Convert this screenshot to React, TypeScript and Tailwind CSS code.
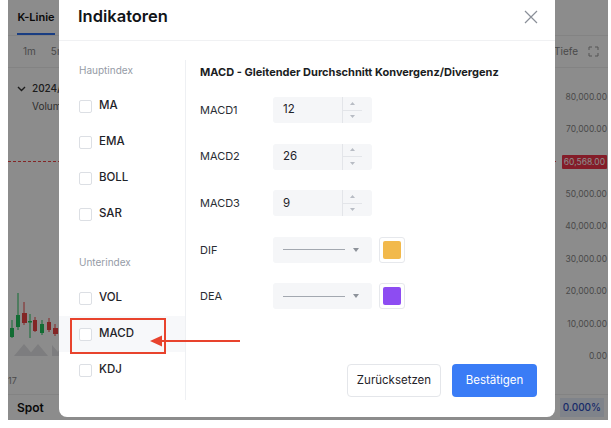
import React from "react";

const prices = [
  "80,000.00",
  "70,000.00",
  "60,568.00",
  "50,000.00",
  "40,000.00",
  "30,000.00",
  "20,000.00",
  "10,000.00",
  "0.00",
];

const Checkbox = () => (
  <span className="w-[13px] h-[13px] rounded-[2px] border border-[#dcdfe4] bg-white shrink-0" />
);

const IndexRow = ({ label, active }: { label: string; active?: boolean }) => (
  <div
    className={`h-[36px] flex items-center gap-[7px] pl-[20px] ${active ? "bg-[#f7f8fa]" : ""}`}
  >
    <Checkbox />
    <span className="text-[11.5px] font-medium text-[#1f2329]">{label}</span>
  </div>
);

const Spinner = () => (
  <div className="w-[30px] h-full flex flex-col border-l border-[#e3e5e9]">
    <div className="flex-1 flex items-center justify-center border-b border-[#e3e5e9] mr-[10px]">
      <svg width="5" height="3" viewBox="0 0 5 3">
        <path d="M0 3 L2.5 0 L5 3 Z" fill="#b8bcc4" />
      </svg>
    </div>
    <div className="flex-1 flex items-center justify-center mr-[10px]">
      <svg width="5" height="3" viewBox="0 0 5 3">
        <path d="M0 0 L2.5 3 L5 0 Z" fill="#b8bcc4" />
      </svg>
    </div>
  </div>
);

const NumberRow = ({ label, value }: { label: string; value: string }) => (
  <div className="h-[26px] flex items-center">
    <span className="w-[73px] text-[11px] text-[#2a2e34]">{label}</span>
    <div className="w-[99px] h-[26px] bg-[#f5f6f8] rounded-[3px] flex items-center justify-between">
      <span className="pl-[10px] text-[11.5px] text-[#1f2329]">{value}</span>
      <Spinner />
    </div>
  </div>
);

const LineRow = ({ label, color }: { label: string; color: string }) => (
  <div className="h-[26px] flex items-center">
    <span className="w-[73px] text-[11px] text-[#2a2e34]">{label}</span>
    <div className="w-[99px] h-[26px] bg-[#f5f6f8] rounded-[3px] flex items-center pl-[10px] pr-[13px] gap-[8px]">
      <span className="flex-1 h-px bg-[#a3a8b0]" />
      <svg width="6" height="4" viewBox="0 0 6 4">
        <path d="M0 0 L3 4 L6 0 Z" fill="#8d929a" />
      </svg>
    </div>
    <div className="ml-[7px] w-[26px] h-[26px] rounded-[3px] border border-[#e6e8ec] flex items-center justify-center">
      <span className="w-[18px] h-[18px] rounded-[2px]" style={{ backgroundColor: color }} />
    </div>
  </div>
);

const Candles = () => (
  <svg width="52" height="70" viewBox="0 0 52 70" className="absolute left-0 top-[222px]">
    <line x1="4" y1="30" x2="4" y2="48" stroke="#22c55e" strokeWidth="1" />
    <rect x="2" y="38" width="4" height="9" fill="#22c55e" />
    <line x1="10" y1="3" x2="10" y2="40" stroke="#22c55e" strokeWidth="1" />
    <rect x="8" y="25" width="4" height="12" fill="#22c55e" />
    <line x1="16" y1="12" x2="16" y2="35" stroke="#ef4444" strokeWidth="1" />
    <rect x="14" y="23" width="5" height="10" fill="#ef4444" />
    <line x1="22" y1="24" x2="22" y2="48" stroke="#22c55e" strokeWidth="1" />
    <rect x="20" y="31" width="4" height="1.5" fill="#22c55e" />
    <line x1="27" y1="27" x2="27" y2="42" stroke="#ef4444" strokeWidth="1" />
    <rect x="25" y="30" width="4" height="11" fill="#ef4444" />
    <line x1="34" y1="30" x2="34" y2="45" stroke="#22c55e" strokeWidth="1" />
    <rect x="32" y="34" width="4" height="9" fill="#22c55e" />
    <line x1="41" y1="28" x2="41" y2="42" stroke="#ef4444" strokeWidth="1" />
    <rect x="39" y="32" width="4" height="8" fill="#ef4444" />
    <line x1="47" y1="34" x2="47" y2="46" stroke="#ef4444" strokeWidth="1" />
    <rect x="45" y="38" width="5" height="6" fill="#ef4444" />
    <path d="M6 66 L16 54 L26 66 Z M20 66 L30 54 L40 66 Z" fill="#e4e4e7" />
    <path d="M44 66 L44 55 L50 62 L52 58 L52 66 Z" fill="#e4e4e7" />
  </svg>
);

export default function App() {
  return (
    <div
      className="w-[611px] h-[428px] bg-white relative overflow-hidden pl-[8px] pr-[3px] pb-[8px]"
      style={{ fontFamily: "Inter, 'Noto Sans', sans-serif" }}
    >
      {/* background trading page */}
      <div className="relative h-[420px] bg-white flex flex-col overflow-hidden">
        <div className="h-[36px] border-b border-[#eeeeee] flex items-end px-[9px]">
          <div className="flex flex-col items-center">
            <span className="text-[11px] font-semibold text-[#111] pb-[8px]">K-Linie</span>
            <span className="w-[38px] h-[2px] bg-[#2f6fed]" />
          </div>
        </div>
        <div className="h-[32px] border-b border-[#eeeeee] flex items-center justify-between pl-[15px] pr-[9px]">
          <div className="flex gap-[15px] text-[10px] text-[#888]">
            <span>1m</span>
            <span>5m</span>
            <span>15m</span>
          </div>
          <div className="flex items-center gap-[10px] text-[10px] text-[#888]">
            <span>Tiefe</span>
            <svg width="11" height="11" viewBox="0 0 11 11" fill="none" stroke="#999" strokeWidth="1">
              <path d="M1 4V1h3M7 1h3v3M10 7v3H7M4 10H1V7" />
            </svg>
          </div>
        </div>
        <div className="flex-1 flex">
          <div className="flex-1 relative">
            <div className="pl-[9px] pt-[13px] flex flex-col gap-[3px] text-[10px] text-[#333]">
              <div className="flex items-center gap-[6px]">
                <svg width="9" height="6" viewBox="0 0 9 6" fill="none" stroke="#333" strokeWidth="1.4">
                  <path d="M1 1l3.5 3.5L8 1" />
                </svg>
                <span className="font-medium">2024/01/17</span>
              </div>
              <span className="pl-[15px] text-[#555]">Volumen</span>
            </div>
            <div className="absolute left-0 right-0 top-[93px] border-t border-dashed border-[#ef4444]" />
            <Candles />
            <span className="absolute left-0 top-[306px] text-[9px] text-[#888]">17</span>
          </div>
          <div className="w-[52px] flex flex-col items-end pt-[13px] pr-[1px] text-[8.5px] text-[#888]">
            {prices.map((p) => (
              <div key={p} className="h-[32.4px] flex items-center">
                {p === "60,568.00" ? (
                  <span className="bg-[#f0334a] text-white px-[2px] py-[1px] rounded-[1px]">{p}</span>
                ) : (
                  <span>{p}</span>
                )}
              </div>
            ))}
          </div>
        </div>
        <div className="h-[26px] border-t border-[#eeeeee] flex items-center justify-between pl-[9px] pr-[4px]">
          <span className="text-[12px] font-semibold text-[#111]">Spot</span>
          <span className="bg-[#e7eefc] text-[#2e4fc0] text-[10px] font-medium px-[3px] py-[2px]">0.000%</span>
        </div>
        <div className="absolute inset-0 bg-black/45" />
      </div>

      {/* modal */}
      <div className="absolute left-[59px] top-0 w-[496px] h-[417px] bg-white rounded-b-[8px] flex flex-col">
        <div className="h-[41px] border-b border-[#f0f1f3] flex items-center justify-between pl-[19px] pr-[17px] pb-[7px]">
          <span className="text-[16.5px] font-semibold text-[#111418]">Indikatoren</span>
          <svg width="14" height="14" viewBox="0 0 14 14" fill="none" stroke="#8a8f98" strokeWidth="1.2">
            <path d="M1 1l12 12M13 1L1 13" />
          </svg>
        </div>
        <div className="flex-1 flex pt-[19px] pb-[17px]">
          <div className="w-[127px] border-r border-[#eef0f3] flex flex-col pt-[3px]">
            <span className="pl-[20px] h-[14px] leading-[14px] text-[10px] text-[#959ba6] mb-[11px]">Hauptindex</span>
            <IndexRow label="MA" />
            <IndexRow label="EMA" />
            <IndexRow label="BOLL" />
            <IndexRow label="SAR" />
            <span className="pl-[20px] h-[14px] leading-[14px] text-[10px] text-[#959ba6] mt-[23px] mb-[11px]">Unterindex</span>
            <IndexRow label="VOL" />
            <IndexRow label="MACD" active />
            <IndexRow label="KDJ" />
          </div>
          <div className="flex-1 flex flex-col pl-[14px] pr-[18px] pt-[5px]">
            <span className="h-[14px] leading-[14px] text-[11px] font-bold text-[#1a1d22]">
              MACD - Gleitender Durchschnitt Konvergenz/Divergenz
            </span>
            <div className="mt-[18px] flex flex-col gap-[20.6px]">
              <NumberRow label="MACD1" value="12" />
              <NumberRow label="MACD2" value="26" />
              <NumberRow label="MACD3" value="9" />
              <LineRow label="DIF" color="#f2b94b" />
              <LineRow label="DEA" color="#8d4cf2" />
            </div>
            <div className="mt-auto flex justify-end gap-[11px] pb-[3px]">
              <button className="w-[94px] h-[33px] rounded-[4px] border border-[#e4e6ea] bg-white text-[11.5px] text-[#1f2329]">
                Zurücksetzen
              </button>
              <button className="w-[85px] h-[33px] rounded-[4px] bg-[#3a7cf6] text-[11.5px] text-white">
                Bestätigen
              </button>
            </div>
          </div>
        </div>
      </div>

      {/* annotation */}
      <div className="absolute left-[70px] top-[318px] w-[96px] h-[36px] border-2 border-[#e8432d]" />
      <svg width="100" height="14" viewBox="0 0 100 14" className="absolute left-[148px] top-[334px]">
        <line x1="12" y1="7" x2="92" y2="7" stroke="#e8432d" strokeWidth="2" />
        <path d="M2 7 L14 1.5 L14 12.5 Z" fill="#e8432d" />
      </svg>
    </div>
  );
}
